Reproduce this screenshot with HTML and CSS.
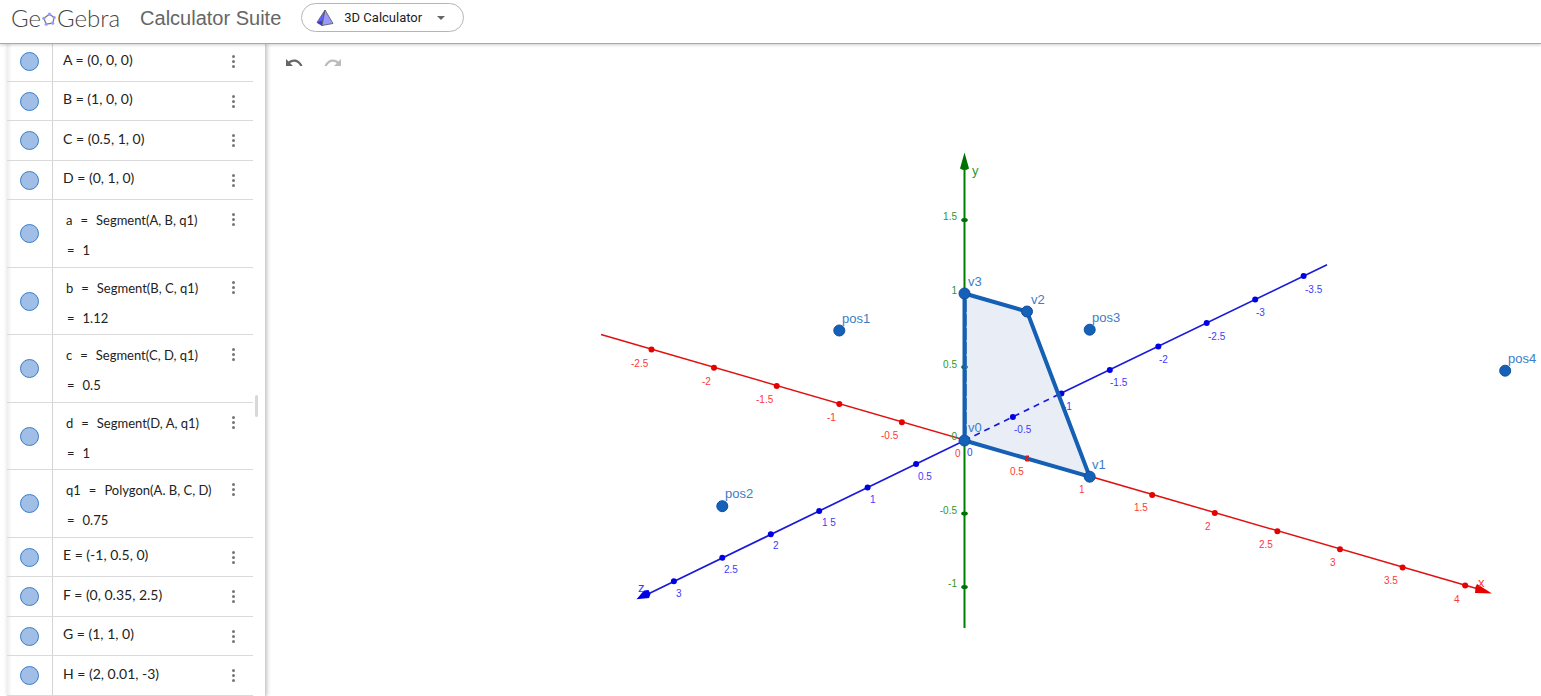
FILE: index.html
```html
<!DOCTYPE html>
<html lang="en">
<head>
<meta charset="utf-8">
<title>GeoGebra Calculator Suite</title>
<link rel="stylesheet" href="styles.css">
</head>
<body>
<header class="header">
  <a class="logo" href="#" aria-label="GeoGebra">
    <span>Ge</span><svg class="logo-mark" viewBox="0 0 16 16" width="16" height="16" aria-hidden="true"><path d="M8.5 3.2 13.2 6.500 11.7 12.2 5.2 13 2.8 7.3Z" fill="none" stroke="#777" stroke-width="1.2"/><g fill="#9999ff"><circle cx="8.5" cy="3.2" r="1.6"/><circle cx="13.2" cy="6.5" r="1.6"/><circle cx="11.7" cy="12.2" r="1.6"/><circle cx="5.2" cy="13.2" r="1.6"/><circle cx="2.8" cy="7.3" r="1.6"/></g></svg><span>Gebra</span>
  </a>
  <span class="suite">Calculator Suite</span>
  <button class="picker" type="button">
    <svg viewBox="0 0 18 18" width="18" height="18" aria-hidden="true"><path d="M9 1 1 13.5 6 16.5Z" fill="#6161ff" stroke="#555" stroke-width=".8"/><path d="M9 1 6 16.5 17 14.5Z" fill="#9999ff" stroke="#555" stroke-width=".8"/><path d="M1 13.5 6 11.5V16.5Z" fill="#3b3bd8"/></svg>
    <span>3D Calculator</span>
    <svg class="caret" viewBox="0 0 8 4" width="8" height="4" aria-hidden="true"><path d="M0 0H8L4 4Z" fill="#666"/></svg>
  </button>
</header>
<main class="main">
  <section class="algebra" aria-label="Algebra">
    <ul class="list">
      <li class="row"><button class="mark" type="button" aria-label="Show A"></button><p class="def">A = (0, 0, 0)</p><button class="more" type="button" aria-label="More"><i></i><i></i><i></i></button></li>
      <li class="row"><button class="mark" type="button" aria-label="Show B"></button><p class="def">B = (1, 0, 0)</p><button class="more" type="button" aria-label="More"><i></i><i></i><i></i></button></li>
      <li class="row"><button class="mark" type="button" aria-label="Show C"></button><p class="def">C = (0.5, 1, 0)</p><button class="more" type="button" aria-label="More"><i></i><i></i><i></i></button></li>
      <li class="row"><button class="mark" type="button" aria-label="Show D"></button><p class="def">D = (0, 1, 0)</p><button class="more" type="button" aria-label="More"><i></i><i></i><i></i></button></li>
      <li class="row tall"><button class="mark" type="button" aria-label="Show a"></button><div class="def"><p class="cmd"><span>a</span><span>=</span><span>Segment(A, B, q1)</span></p><p class="out"><span>=</span><span>1</span></p></div><button class="more" type="button" aria-label="More"><i></i><i></i><i></i></button></li>
      <li class="row tall"><button class="mark" type="button" aria-label="Show b"></button><div class="def"><p class="cmd"><span>b</span><span>=</span><span>Segment(B, C, q1)</span></p><p class="out"><span>=</span><span>1.12</span></p></div><button class="more" type="button" aria-label="More"><i></i><i></i><i></i></button></li>
      <li class="row tall"><button class="mark" type="button" aria-label="Show c"></button><div class="def"><p class="cmd"><span>c</span><span>=</span><span>Segment(C, D, q1)</span></p><p class="out"><span>=</span><span>0.5</span></p></div><button class="more" type="button" aria-label="More"><i></i><i></i><i></i></button></li>
      <li class="row tall"><button class="mark" type="button" aria-label="Show d"></button><div class="def"><p class="cmd"><span>d</span><span>=</span><span>Segment(D, A, q1)</span></p><p class="out"><span>=</span><span>1</span></p></div><button class="more" type="button" aria-label="More"><i></i><i></i><i></i></button></li>
      <li class="row tall"><button class="mark" type="button" aria-label="Show q1"></button><div class="def"><p class="cmd"><span>q1</span><span>=</span><span>Polygon(A. B, C, D)</span></p><p class="out"><span>=</span><span>0.75</span></p></div><button class="more" type="button" aria-label="More"><i></i><i></i><i></i></button></li>
      <li class="row"><button class="mark" type="button" aria-label="Show E"></button><p class="def">E = (-1, 0.5, 0)</p><button class="more" type="button" aria-label="More"><i></i><i></i><i></i></button></li>
      <li class="row"><button class="mark" type="button" aria-label="Show F"></button><p class="def">F = (0, 0.35, 2.5)</p><button class="more" type="button" aria-label="More"><i></i><i></i><i></i></button></li>
      <li class="row"><button class="mark" type="button" aria-label="Show G"></button><p class="def">G = (1, 1, 0)</p><button class="more" type="button" aria-label="More"><i></i><i></i><i></i></button></li>
      <li class="row"><button class="mark" type="button" aria-label="Show H"></button><p class="def">H = (2, 0.01, -3)</p><button class="more" type="button" aria-label="More"><i></i><i></i><i></i></button></li>
    </ul>
    <div class="grip"></div>
  </section>
  <section class="view" aria-label="3D Graphics">
    <div class="tools">
      <button type="button" aria-label="Undo"><svg viewBox="0 0 18 8" width="18" height="8"><path d="M1 1V8H8L5.200 5.200C8 2.900 12.500 3 15.200 8H17.500C14.500 .8 7.500 .2 3.600 3.600Z" fill="#666"/></svg></button>
      <button type="button" aria-label="Redo" disabled><svg viewBox="0 0 18 8" width="18" height="8"><path d="M17 1V8H10L12.800 5.200C10 2.900 5.500 3 2.800 8H.5C3.500 .8 10.500 .2 14.400 3.600Z" fill="#bbb"/></svg></button>
    </div>
    <svg class="plot" viewBox="266 44 1275 652" preserveAspectRatio="xMidYMid meet">
      <polygon points="964.500,440.500 1089.700,476.700 1027,311.500 964.500,293.500" fill="#e9eef6"/>
      <g class="axis-x">
        <path d="M601 334.500 1480 589.500" stroke-width="1.500"/>
        <path class="solid" d="M1477 584 1492 593.500 1475 593 1475.500 587Z"/>
      </g>
      <g class="axis-z">
        <path d="M964.500 440.500 645 595.500M1060 393.800 1327 264.800" stroke-width="1.700"/>
        <path d="M964.500 440.500 1060 393.800" stroke-width="1.700" stroke-dasharray="6 5"/>
        <path class="solid" d="M636.500 599.300 644 590.500 648.500 590 650.500 594 649 598Z"/>
      </g>
      <g class="axis-y">
        <path d="M964.500 628V165" stroke-width="2"/>
        <path class="solid" d="M964.500 152.500 969 168.500Q964.500 171.500 960 168.500Z"/>
      </g>
      <g class="axis-x ticks">
        <circle cx="651.500" cy="349.500" r="3"/><circle cx="714" cy="367.700" r="3"/><circle cx="776.700" cy="385.900" r="3"/><circle cx="839.300" cy="404.100" r="3"/><circle cx="901.900" cy="422.200" r="3"/>
        <circle cx="1152.200" cy="494.900" r="3"/><circle cx="1214.800" cy="513" r="3"/><circle cx="1277.400" cy="531.200" r="3"/><circle cx="1340" cy="549.300" r="3"/><circle cx="1402.600" cy="567.400" r="3"/><circle cx="1465.200" cy="585.600" r="3"/>
        <g class="num"><text x="631" y="367">-2.5</text><text x="702" y="385">-2</text><text x="756" y="403">-1.5</text><text x="827" y="421">-1</text><text x="881" y="439">-0.5</text><text x="955" y="457">0</text><text x="1010" y="475">0.5</text><text x="1079" y="493">1</text><text x="1134" y="511">1.5</text><text x="1205" y="530">2</text><text x="1259" y="548">2.5</text><text x="1330" y="566">3</text><text x="1384" y="584">3.5</text><text x="1454" y="603">4</text></g>
        <text class="name" x="1478" y="587">x</text>
      </g>
      <g class="axis-z ticks">
        <circle cx="673.900" cy="581.200" r="3"/><circle cx="722.300" cy="557.800" r="3"/><circle cx="770.800" cy="534.300" r="3"/><circle cx="819.200" cy="510.900" r="3"/><circle cx="867.600" cy="487.400" r="3"/><circle cx="916.100" cy="463.900" r="3"/>
        <circle cx="1012.900" cy="417" r="3"/><circle cx="1061.400" cy="393.500" r="3"/><circle cx="1109.800" cy="370.100" r="3"/><circle cx="1158.300" cy="346.600" r="3"/><circle cx="1206.700" cy="323.100" r="3"/><circle cx="1255.200" cy="299.600" r="3"/><circle cx="1303.600" cy="276.100" r="3"/>
        <g class="num"><text x="676" y="597">3</text><text x="724" y="573">2.5</text><text x="773" y="549">2</text><text x="822" y="526">1 5</text><text x="870" y="503">1</text><text x="918" y="480">0.5</text><text x="967" y="456">0</text><text x="1014" y="433">-0.5</text><text x="1063" y="410">-1</text><text x="1110" y="386">-1.5</text><text x="1159" y="363">-2</text><text x="1208" y="340">-2.5</text><text x="1256" y="316">-3</text><text x="1305" y="293">-3.5</text></g>
        <text class="name" x="638" y="592">z</text>
      </g>
      <g class="axis-y ticks">
        <ellipse cx="964.500" cy="219.900" rx="3.300" ry="2"/><ellipse cx="964.500" cy="366.900" rx="3.300" ry="2"/><ellipse cx="964.500" cy="513.500" rx="3.300" ry="2"/><ellipse cx="964.500" cy="587" rx="3.300" ry="2"/>
        <g class="num end"><text x="957" y="220">1.5</text><text x="957" y="294">1</text><text x="957" y="368">0.5</text><text x="957" y="440">0</text><text x="957" y="514">-0.5</text><text x="957" y="587">-1</text></g>
        <text class="name" x="972" y="175">y</text>
      </g>
      <path class="edge" d="M964.500 440.500 1089.700 476.700 1027 311.500 964.500 293.500Z"/>
      <path d="M966.500 300V434" stroke="#3c77b8" stroke-width="1" stroke-dasharray="12 2"/>
      <path d="M1025.500 456.500H1029M1025.500 460.500H1029M1026 456V461" stroke="#d81b1b" stroke-width="2"/>
      <g class="points">
        <circle cx="964.500" cy="440.500" r="5.500"/><circle cx="1089.700" cy="476.700" r="5.500"/><circle cx="1027" cy="311.500" r="5.500"/><circle cx="964.500" cy="293.500" r="5.500"/><circle cx="839.300" cy="330.500" r="5.500"/><circle cx="722.300" cy="506.200" r="5.500"/><circle cx="1089.700" cy="329.700" r="5.500"/><circle cx="1505.200" cy="370.700" r="5.500"/>
        <text x="968" y="432">v0</text><text x="1092" y="469">v1</text><text x="1031" y="304">v2</text><text x="968" y="286">v3</text><text x="842" y="323">pos1</text><text x="725" y="498">pos2</text><text x="1092" y="322">pos3</text><text x="1508" y="363">pos4</text>
      </g>
    </svg>
  </section>
</main>
</body>
</html>
```
FILE: styles.css
```css
* { box-sizing: border-box; }
body { margin: 0; height: 100vh; display: flex; flex-direction: column; overflow: hidden; background: #fff; font-family: "Liberation Sans", Arial, sans-serif; }
button { margin: 0; padding: 0; border: 0; background: none; font: inherit; color: inherit; }
p { margin: 0; }

.header { flex: none; height: 44px; padding: 3px 0 11px 11px; display: flex; align-items: center; border-bottom: 1px solid #a8a8a8; box-shadow: 0 1px 3px rgba(0, 0, 0, .2); position: relative; z-index: 2; background: #fff; color: #666; }
.logo { display: flex; align-items: center; color: #444; text-decoration: none; font: 300 24px/28px Lato, sans-serif; }
.logo-mark { margin-top: 3px; }
.suite { margin-left: 20px; font-size: 20px; line-height: 28px; }
.picker { margin-left: 20px; width: 163px; height: 29px; padding: 0 18px 0 14px; display: flex; align-items: center; gap: 10px; border: 1px solid #b4b4bc; border-radius: 15px; color: #1c1c1f; font: 400 13px/20px Roboto, sans-serif; }
.caret { margin-left: auto; }

.main { flex: 1; min-height: 0; display: flex; }
.algebra { position: relative; flex: none; width: 259px; margin-left: 7px; overflow: hidden; border-right: 1px solid #d0d0d0; box-shadow: 1px 0 4px rgba(0, 0, 0, .25); background: linear-gradient(to right, #eee, #fff 5px); }
.list { list-style: none; margin: -2px 12px 0 0; padding: 0; }
.row { display: grid; grid-template-columns: 46px minmax(0, 1fr) 40px; height: 39px; border-bottom: 1px solid #dadada; }
.row:nth-child(odd) { height: 40px; }
.row.tall { height: 67px; }
.row.tall:nth-child(odd) { height: 68px; }
.mark { display: flex; align-items: center; justify-content: center; padding-right: 1px; border-right: 1px solid #d4d4d4; }
.mark::before { content: ""; width: 17px; height: 17px; border: 1px solid #3a7cc8; border-radius: 50%; background: #a1bfe6; }
.def { padding: 7px 0 0 10px; font: 14px/20px Lato, sans-serif; color: #222; white-space: nowrap; }
.row:nth-child(odd) .def { padding-top: 8px; }
.row.tall .def { padding: 10px 0 0 13px; font-size: 13px; }
.cmd, .out { display: flex; gap: 8px; }
.out { padding-left: 1px; margin-top: 10px; }
.more { display: flex; flex-direction: column; align-items: center; justify-content: center; gap: 2px; }
.more i { width: 3px; height: 3px; border-radius: 50%; background: #757575; }
.tall .more { height: 39px; }
.grip { position: absolute; right: 7px; top: 351px; width: 3px; height: 22px; border-radius: 2px; background: #d8d8dc; }

.view { position: relative; flex: 1; min-width: 0; }
.tools { position: absolute; left: 19px; top: 14px; display: flex; gap: 21px; }
.tools svg { display: block; }
.plot { display: block; width: 100%; height: 100%; }
.axis-x { fill: none; stroke: #e01010; }
.axis-y { fill: none; stroke: #008000; }
.axis-z { fill: none; stroke: #1a1ad8; }
.axis-x .solid, .axis-x.ticks { fill: #e60000; stroke: none; }
.axis-y .solid, .axis-y.ticks { fill: #007000; stroke: none; }
.axis-z .solid, .axis-z.ticks { fill: #0000e6; stroke: none; }
.axis-x text { fill: #ff3838; }
.axis-y text { fill: #2f972f; }
.axis-z text { fill: #3c3cff; }
.num { font-size: 10px; }
.end { text-anchor: end; }
.name, .points text { font-size: 13px; }
.edge { fill: none; stroke: #1560b4; stroke-width: 4; stroke-linejoin: round; }
.points { fill: #1560b8; }
.points circle { stroke: #0f4f9a; stroke-width: 1; }
.points text { fill: #3c7dc8; }
```
